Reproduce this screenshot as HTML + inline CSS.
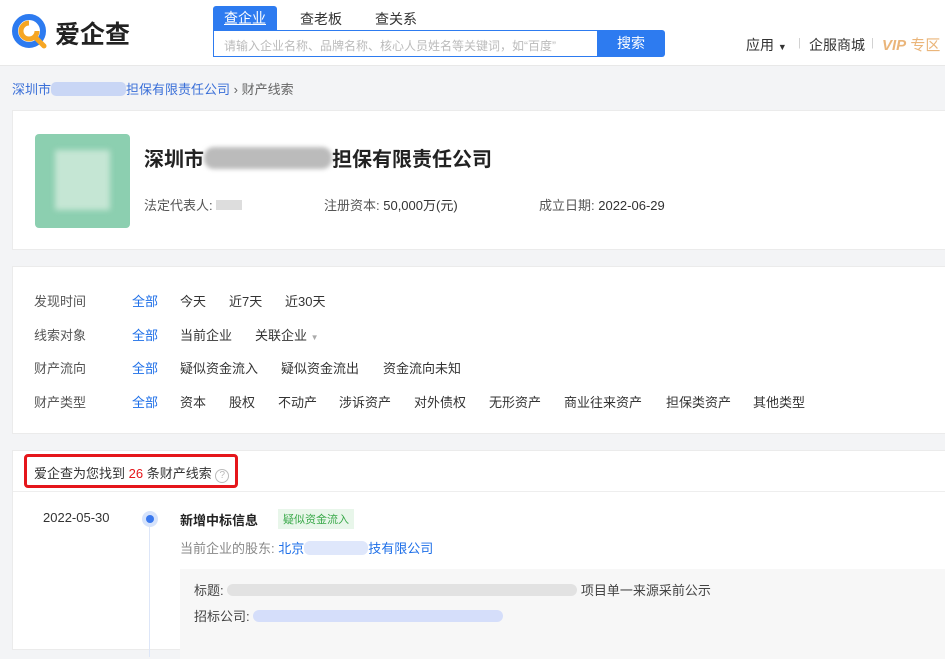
<!DOCTYPE html><html><head><meta charset="utf-8"><style>
*{margin:0;padding:0;box-sizing:border-box}
body{width:945px;height:636px;overflow:hidden;background:#f3f4f6;font-family:"Liberation Sans","Noto Sans CJK SC",sans-serif;font-size:13px;color:#333;position:relative}
.a{position:absolute;white-space:nowrap}
.hdr{position:absolute;left:0;top:0;width:945px;height:66px;background:#fff;border-bottom:1px solid #e8e8e8}
.card{position:absolute;left:12px;width:940px;background:#fff;border:1px solid #ebebeb}
.blue{color:#1e6fe8}
.f span{position:absolute;white-space:nowrap}
</style></head><body>
<div class="hdr">
<svg class="a" style="left:10px;top:12px" width="42" height="40" viewBox="0 0 42 40"><circle cx="19" cy="19" r="14" fill="none" stroke="#2d7bf0" stroke-width="6"/><path d="M19 11a8 8 0 1 0 8 8" fill="none" stroke="#f6a623" stroke-width="5"/><path d="M26 26l8 8" stroke="#f6a623" stroke-width="5" stroke-linecap="round"/></svg>
<div class="a" style="left:55px;top:15px;font-size:25px;font-weight:bold;color:#222">爱企查</div>
<div class="a" style="left:213px;top:6px;width:64px;height:24px;background:#2d7bf0;border-radius:3px 3px 0 0;color:#fff;font-size:14px;text-align:center;line-height:24px;text-decoration:underline">查企业</div>
<div class="a" style="left:300px;top:9px;font-size:14px;color:#333">查老板</div>
<div class="a" style="left:375px;top:9px;font-size:14px;color:#333">查关系</div>
<div class="a" style="left:213px;top:30px;width:385px;height:27px;border:1px solid #2d7bf0;border-right:none;font-size:12px;color:#bbb;padding:6px 0 0 10px">请输入企业名称、品牌名称、核心人员姓名等关键词，如“百度”</div>
<div class="a" style="left:597px;top:30px;width:68px;height:27px;background:#2d7bf0;color:#fff;font-size:14px;text-align:center;line-height:27px;border-radius:0 3px 3px 0">搜索</div>
<div class="a" style="left:746px;top:35px;font-size:14px">应用 <span style="font-size:9px">▼</span></div>
<div class="a" style="left:798px;top:37px;color:#ccc;font-size:11px">|</div>
<div class="a" style="left:809px;top:35px;font-size:14px">企服商城</div>
<div class="a" style="left:871px;top:37px;color:#ccc;font-size:11px">|</div>
<div class="a" style="left:882px;top:34px;font-size:15px;color:#eab57a"><b><i>VIP</i></b> 专区</div>
</div>
<div class="a" style="left:12px;top:79px;font-size:13px"><span style="color:#3a6fd8">深圳市<span style="display:inline-block;width:75px;height:14px;background:#c9d6f5;border-radius:5px;vertical-align:-2px"></span>担保有限责任公司</span> <span style="color:#666">› 财产线索</span></div>
<div class="card" style="top:110px;height:140px">
<div class="a" style="left:22px;top:23px;width:95px;height:94px;background:#8ccfb0;border-radius:4px"><div style="margin:16px 0 0 20px;width:55px;height:60px;background:#c5e6d4;filter:blur(3px)"></div></div>
<div class="a" style="left:131px;top:32px;font-size:20px;font-weight:bold;color:#222">深圳市<span style="display:inline-block;width:128px;height:22px;background:#bbb;border-radius:10px;vertical-align:-3px;filter:blur(2px)"></span>担保有限责任公司</div>
<div class="a" style="left:131px;top:84px;color:#555">法定代表人: <span style="display:inline-block;width:26px;height:10px;background:#ddd"></span></div>
<div class="a" style="left:311px;top:84px;color:#555">注册资本: <span style="color:#333">50,000万(元)</span></div>
<div class="a" style="left:526px;top:84px;color:#555">成立日期: <span style="color:#333">2022-06-29</span></div>
</div>
<div class="card f" style="top:266px;height:168px">
<span style="left:21px;top:24px;color:#555">发现时间</span><span style="left:21px;top:58px;color:#555">线索对象</span><span style="left:21px;top:91px;color:#555">财产流向</span><span style="left:21px;top:125px;color:#555">财产类型</span>
<span class="blue" style="left:119px;top:24px">全部</span><span style="left:167px;top:24px">今天</span><span style="left:216px;top:24px">近7天</span><span style="left:272px;top:24px">近30天</span>
<span class="blue" style="left:119px;top:58px">全部</span><span style="left:167px;top:58px">当前企业</span><span style="left:242px;top:58px">关联企业 <i style="font-size:8px;color:#aaa;font-style:normal">▼</i></span>
<span class="blue" style="left:119px;top:91px">全部</span><span style="left:167px;top:91px">疑似资金流入</span><span style="left:268px;top:91px">疑似资金流出</span><span style="left:370px;top:91px">资金流向未知</span>
<span class="blue" style="left:119px;top:125px">全部</span><span style="left:167px;top:125px">资本</span><span style="left:216px;top:125px">股权</span><span style="left:265px;top:125px">不动产</span><span style="left:326px;top:125px">涉诉资产</span><span style="left:401px;top:125px">对外债权</span><span style="left:476px;top:125px">无形资产</span><span style="left:551px;top:125px">商业往来资产</span><span style="left:653px;top:125px">担保类资产</span><span style="left:740px;top:125px">其他类型</span>
</div>
<div class="card" style="top:450px;height:200px">
<div class="a" style="left:0;top:40px;width:940px;border-top:1px solid #eee"></div>
<div class="a" style="left:11px;top:3px;width:214px;height:34px;border:3px solid #e5161b;border-radius:4px;padding:6px 0 0 7px;font-size:13px">爱企查为您找到 <span style="color:#e5161b">26</span> 条财产线索 <span style="display:inline-block;width:14px;height:14px;border:1px solid #bbb;border-radius:50%;font-size:10px;color:#bbb;text-align:center;line-height:12px">?</span></div>
<div class="a" style="left:30px;top:59px">2022-05-30</div>
<div class="a" style="left:129px;top:60px;width:16px;height:16px;border-radius:50%;background:#d6e3fb"><div style="margin:4px;width:8px;height:8px;border-radius:50%;background:#3a78ee"></div></div>
<div class="a" style="left:136px;top:76px;width:1px;height:130px;background:#dde6f8"></div>
<div class="a" style="left:167px;top:59px;font-weight:bold;color:#222">新增中标信息</div>
<div class="a" style="left:265px;top:58px;background:#e8f6ea;color:#3aa94a;font-size:11px;padding:2px 5px">疑似资金流入</div>
<div class="a" style="left:167px;top:87px;color:#888">当前企业的股东: <span class="blue">北京<span style="display:inline-block;width:64px;height:14px;background:#dfe7fb;border-radius:6px;vertical-align:-2px"></span>技有限公司</span></div>
<div class="a" style="left:167px;top:118px;width:780px;height:90px;background:#f7f7f7"></div>
<div class="a" style="left:181px;top:129px;color:#444">标题: <span style="display:inline-block;width:350px;height:12px;background:#e2e2e2;border-radius:6px;vertical-align:-1px"></span> 项目单一来源采前公示</div>
<div class="a" style="left:181px;top:155px;color:#444">招标公司: <span style="display:inline-block;width:250px;height:12px;background:#d5defa;border-radius:6px;vertical-align:-1px"></span></div>
</div>
</body></html>
